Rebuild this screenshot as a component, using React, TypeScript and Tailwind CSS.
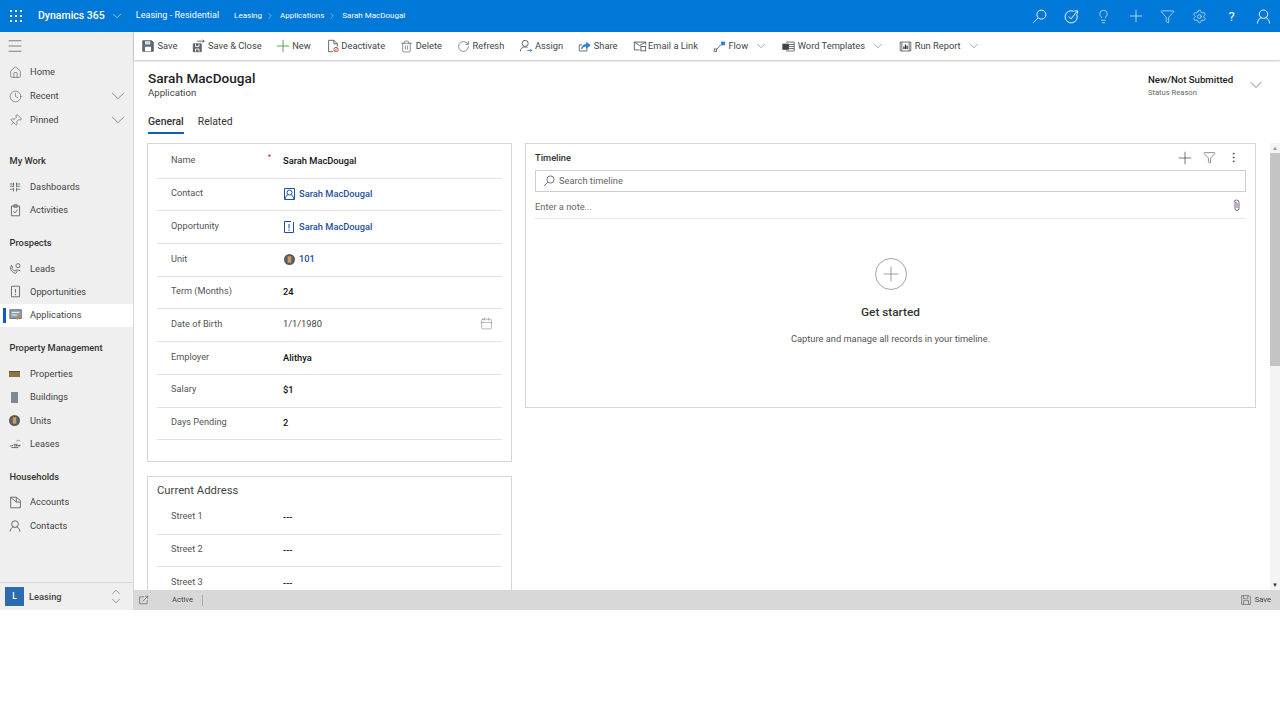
import { Lightbulb, Plus, Funnel, Settings, Home, Clock, Pin, ChevronDown, ChevronUp, ChevronRight, Trash2, RotateCw, EllipsisVertical, Calendar, Menu } from "lucide-react";
import type { ReactNode } from "react";

function Dots() {
    const pts = [0, 5, 10];
    return (
        <svg width="12" height="12" viewBox="0 0 12 12" fill="white">
            {pts.map((y) => pts.map((x) => <rect key={`${x}-${y}`} x={x} y={y} width="2" height="2" />))}
        </svg>
    );
}

function Svg({ children, size = 14, stroke = "#555" }: { children: ReactNode; size?: number; stroke?: string }) {
    return (
        <svg width={size} height={size} viewBox="0 0 16 16" fill="none" stroke={stroke} strokeWidth="1">
            {children}
        </svg>
    );
}

const thin = { size: 13, strokeWidth: 1.2, color: "#555" };

const SearchIcon = ({ size, stroke }: { size: number; stroke: string }) => (
    <Svg size={size} stroke={stroke}>
        <circle cx="10" cy="6" r="4.800" />
        <path d="M6.500 9.500L1.500 14.500" />
    </Svg>
);
const UserIcon = ({ size, stroke }: { size: number; stroke: string }) => (
    <Svg size={size} stroke={stroke}>
        <circle cx="8" cy="5.500" r="4.500" />
        <path d="M1.500 15.500c0-3.500 2.500-6 4.500-6.500M14.500 15.500c0-3.500-2.500-6-4.500-6.500" />
    </Svg>
);
const IconSave = () => (
    <Svg size={12}>
        <path d="M1 1h12l2 2v12H1z" fill="#5f6b7a" stroke="#444" />
        <rect x="4" y="1.500" width="7" height="4.500" fill="#d5dbe3" stroke="none" />
        <rect x="4" y="9" width="8" height="6" fill="#fff" stroke="none" />
    </Svg>
);
const IconSaveSmall = () => (
    <Svg size={10} stroke="#555">
        <path d="M1 1h12l2 2v12H1z" />
        <path d="M4 1v5h7V1M4 15V9h8v6" />
    </Svg>
);
const IconSaveClose = () => (
    <Svg>
        <path d="M1.500 5.500h9v9h-9z" fill="#667" />
        <path d="M4 5.500v3h4v-3M4 14.500v-3h4v3" stroke="#fff" />
        <path d="M6 2.500h8M12 1l2 1.500L12 4" />
    </Svg>
);
const IconDeactivate = () => (
    <Svg>
        <path d="M3 1.500h6l4 4v3M9 1.500v4h4M8 14.500H3v-13" />
        <circle cx="11.500" cy="12" r="2.500" stroke="#c0392b" />
        <path d="M10 13.500l3-3" stroke="#c0392b" />
    </Svg>
);
const IconAssign = () => (
    <Svg>
        <circle cx="7" cy="5" r="3.500" />
        <path d="M1.500 14c0-3 2.500-5 5.500-5 1 0 2 .3 2.800.8" />
        <path d="M9.500 13h5M13 11.500l1.500 1.500-1.500 1.500" stroke="#1f6fc0" />
    </Svg>
);
const IconEmailLink = () => (
    <Svg>
        <path d="M1.500 3.500h13v3M1.500 3.500v9h6M1.500 3.500l6 4 7-4" />
        <rect x="9" y="8.500" width="5.500" height="5" />
    </Svg>
);
const IconFlow = () => (
    <Svg size={13}>
        <rect x="1.500" y="11" width="3" height="3" />
        <path d="M4.500 11.500L10 5.500" />
        <rect x="10.500" y="2.500" width="4" height="3.500" fill="#2b7cd3" stroke="#2b7cd3" />
    </Svg>
);
const IconWord = () => (
    <Svg size={13}>
        <path d="M5 2.500h10v11H5" />
        <path d="M8 5.500h7M8 8h7M8 10.500h7" />
        <rect x="1" y="5" width="7" height="6.500" fill="#444" stroke="#444" />
    </Svg>
);
const IconReport = () => (
    <Svg size={13}>
        <path d="M1.500 2.500h13v11h-13zM3.500 2.500v11M12.500 2.500v11" />
        <path d="M6 11V8M8 11V5.500M10 11V7" strokeWidth="1.500" stroke="#333" />
    </Svg>
);
const IconShare = () => (
    <Svg size={13}>
        <path d="M11 9v4.500H1.500V6H5" />
        <path d="M4.500 11c0-4 3-5.500 6-5.500V3L15 6.500 10.500 10V7.500c-3 0-4.500 1-6 3.500z" fill="#2b7cd3" stroke="#2b7cd3" />
    </Svg>
);

function CmdItem({ icon, text, caret }: { icon: ReactNode; text: string; caret?: boolean }) {
    return (
        <div className="flex items-center text-[#444]">
            <div className="w-[15.500px] h-[14px] flex items-center">{icon}</div>
            <span>{text}</span>
            {caret && <ChevronDown size={14} strokeWidth={1} color="#666" className="ml-[6px] -mr-[1px]" />}
        </div>
    );
}

function CommandBar() {
    return (
        <div className="h-7 flex items-center gap-[15.100px] pl-[8px] text-[9.300px] bg-white shadow-[0_1px_2px_rgba(0,0,0,0.25)] z-10">
            <CmdItem icon={<IconSave />} text="Save" />
            <CmdItem icon={<IconSaveClose />} text="Save & Close" />
            <CmdItem icon={<Plus size={20} strokeWidth={0.8} color="#107c10" className="-ml-[4px] shrink-0" />} text="New" />
            <CmdItem icon={<IconDeactivate />} text="Deactivate" />
            <CmdItem icon={<Trash2 {...thin} />} text="Delete" />
            <CmdItem icon={<RotateCw {...thin} />} text="Refresh" />
            <CmdItem icon={<IconAssign />} text="Assign" />
            <CmdItem icon={<IconShare />} text="Share" />
            <CmdItem icon={<IconEmailLink />} text="Email a Link" />
            <CmdItem icon={<IconFlow />} text="Flow" caret />
            <CmdItem icon={<IconWord />} text="Word Templates" caret />
            <CmdItem icon={<IconReport />} text="Run Report" caret />
        </div>
    );
}

function TopBar() {
    return (
        <div className="h-8 bg-[#0078d7] flex items-center text-white shrink-0">
            <div className="ml-[10px] mr-[16px]"><Dots /></div>
            <span className="text-[10.500px] font-medium">Dynamics 365</span>
            <ChevronDown size={14} strokeWidth={1} className="ml-[5px] -mr-[1px]" />
            <span className="ml-[13px] text-[9.100px]">Leasing - Residential</span>
            <span className="ml-[15px] text-[8px]">Leasing</span>
            <ChevronRight size={10} strokeWidth={1} className="ml-[3px] mr-[5px]" />
            <span className="text-[8px]">Applications</span>
            <ChevronRight size={10} strokeWidth={1} className="ml-[3px] mr-[5px]" />
            <span className="text-[8px]">Sarah MacDougal</span>
            <div className="ml-auto flex items-center gap-[17px] mr-[9px]">
                <SearchIcon size={15} stroke="white" />
                <svg width="15" height="15" viewBox="0 0 16 16" fill="none" stroke="white" strokeWidth="1">
                    <path d="M13.500 5.500a6.500 6.500 0 1 1-3-3" />
                    <path d="M5 8l2.500 2.500L14 2.500M11 2h3.500v3" />
                </svg>
                <Lightbulb size={15} strokeWidth={1} />
                <Plus size={20} strokeWidth={0.8} className="-mx-[2.500px]" />
                <Funnel size={15} strokeWidth={1} />
                <Settings size={15} strokeWidth={1} />
                <span className="w-[15px] text-center text-[13px] leading-none">?</span>
                <UserIcon size={15} stroke="white" />
            </div>
        </div>
    );
}

const navIcon = { size: 13, strokeWidth: 1, color: "#444" };

function NavItem({ icon, text, caret, active }: { icon: ReactNode; text: string; caret?: boolean; active?: boolean }) {
    return (
        <div className={`relative h-[23.300px] flex items-center pl-[9px] pr-[8px] ${active ? "bg-white" : ""}`}>
            {active && <div className="absolute left-[3px] top-[4px] bottom-[4px] w-[3px] bg-[#0f5bc4]" />}
            <div className="w-[21px] flex items-center">{icon}</div>
            <span className="text-[#444]">{text}</span>
            {caret && <ChevronDown size={22} strokeWidth={0.7} color="#555" className="ml-auto -mr-[4px]" />}
        </div>
    );
}

function NavHeader({ text, first }: { text: string; first?: boolean }) {
    return <div className={`pl-[9.500px] h-[16px] flex items-center font-medium text-[#333] ${first ? "mt-[21px]" : "mt-[13px]"} mb-[6.350px]`}>{text}</div>;
}

function Sidebar() {
    return (
        <div className="w-[134px] shrink-0 bg-[#efefef] border-r border-[#d8d8d8] flex flex-col text-[9.300px]">
            <div className="h-7 flex items-center pl-[6px]"><Menu size={18} strokeWidth={0.8} color="#333" /></div>
            <div className="mt-[0.500px] flex flex-col gap-[0.700px]">
                <NavItem icon={<Home {...navIcon} />} text="Home" />
                <NavItem icon={<Clock {...navIcon} />} text="Recent" caret />
                <NavItem icon={<Pin {...navIcon} className="rotate-45" />} text="Pinned" caret />
            </div>
            <NavHeader text="My Work" first />
            <NavItem icon={<Svg size={12}><path d="M1 4h5M1 7h5M10 4h5M10 7h5M6 2v6M10 2v6M1 11h5M10 11h5M6 9v5M10 9v5" /></Svg>} text="Dashboards" />
            <NavItem icon={<Svg size={13}><path d="M3 2.500h10v12H3zM6 1h4v3H6zM5.500 9l2 2 3-4" /></Svg>} text="Activities" />
            <NavHeader text="Prospects" />
            <NavItem icon={<Svg size={13}><path d="M2 6c-1 3 2 7 6 8l2-2-2-2-1.500 1-3-3 1-1.500L3 4z" /><circle cx="11" cy="4.500" r="2.500" /><path d="M8 11c1-1.500 4-1.500 6 0" /></Svg>} text="Leads" />
            <NavItem icon={<Svg size={13}><path d="M3 1.500h10v13H3zM8 5v4.500M8 11v1.500" /></Svg>} text="Opportunities" />
            <NavItem active icon={<Svg size={14}><rect x="1" y="2" width="13" height="10" fill="#8da0ad" stroke="#667" /><path d="M3 5h9M3 8h6" stroke="#fff" /><path d="M9 13l5-5" stroke="#c98a2b" strokeWidth="2" /></Svg>} text="Applications" />
            <NavHeader text="Property Management" />
            <NavItem icon={<div className="w-[11px] h-[6px] bg-[#8a7440] border-t border-[#5e5230]" />} text="Properties" />
            <NavItem icon={<div className="w-[7px] h-[11px] ml-[2px] bg-[#7d8a96]" />} text="Buildings" />
            <NavItem icon={<UnitIcon size={11} />} text="Units" />
            <NavItem icon={<Svg size={13}><path d="M1 11h3l2-2h4l-1 2H6M9 11l5-1-3 3H3" /><path d="M9 5a3 2 0 0 1 5 0" stroke="#888" /></Svg>} text="Leases" />
            <NavHeader text="Households" />
            <NavItem icon={<Svg size={13}><path d="M2 1.500h7l5 4v9H2zM2 1.500l7 6v-6M9 7.500h5" /></Svg>} text="Accounts" />
            <NavItem icon={<UserIcon size={12} stroke="#444" />} text="Contacts" />
            <div className="mt-auto h-7 border-t border-[#d8d8d8] flex items-center pl-[5px] pr-[10px]">
                <div className="w-[19px] h-[19px] bg-[#2b6cb0] text-white flex items-center justify-center text-[8.500px] font-medium">L</div>
                <span className="ml-[5px] font-medium text-[#444]">Leasing</span>
                <div className="ml-auto flex flex-col">
                    <ChevronUp size={14} strokeWidth={0.8} color="#333" className="-mb-[5px]" />
                    <ChevronDown size={14} strokeWidth={0.8} color="#333" />
                </div>
            </div>
        </div>
    );
}

function UnitIcon({ size }: { size: number }) {
    return (
        <svg width={size} height={size} viewBox="0 0 12 12">
            <circle cx="6" cy="6" r="6" fill="#5b5b5b" />
            <rect x="4" y="2.500" width="4" height="7" fill="#c99a66" />
        </svg>
    );
}

function Field({ label, required, children, bold = true, className = "" }: { label: string; required?: boolean; children: ReactNode; bold?: boolean; className?: string }) {
    return (
        <div className="h-[32.700px] flex items-center border-b border-[#e2e2e2]">
            <div className="relative w-[126px] pl-[14px] -mt-[3px] text-[#555] text-[9.200px]">
                {label}
                {required && <span className="absolute right-[12px] -top-[1px] text-[#c00] text-[7px]">*</span>}
            </div>
            <div className={`flex-1 flex items-center pr-[9px] -mt-[1px] ${bold ? "font-medium text-[#111]" : "text-[#444]"} ${className}`}>{children}</div>
        </div>
    );
}

function Lookup({ icon, text }: { icon: ReactNode; text: string }) {
    return (
        <div className="flex items-center gap-[4px] ml-[1px] text-[#1e4f9c] font-medium">
            {icon}
            <span>{text}</span>
        </div>
    );
}

function FormCard() {
    return (
        <div className="h-[319px] shrink-0 border border-[#d4d4d4] px-[9px] pt-[2px]">
            <Field label="Name" required>Sarah MacDougal</Field>
            <Field label="Contact">
                <Lookup text="Sarah MacDougal" icon={<svg width="11" height="12" viewBox="0 0 11 12" fill="none" stroke="#1e4f9c"><path d="M.5.500h10v11H.5z" /><circle cx="5.500" cy="4.500" r="2.500" /><path d="M1 11c1-3 2-4 3-4.500M10 11c-1-3-2-4-3-4.500" /></svg>} />
            </Field>
            <Field label="Opportunity">
                <Lookup text="Sarah MacDougal" icon={<svg width="11" height="12" viewBox="0 0 11 12" fill="none" stroke="#1e4f9c"><path d="M7 .500H.5v11h9V1M5 3v4.500M5 8.500V10" /></svg>} />
            </Field>
            <Field label="Unit">
                <Lookup text="101" icon={<UnitIcon size={11} />} />
            </Field>
            <Field label="Term (Months)">24</Field>
            <Field label="Date of Birth" bold={false} className="-translate-y-[1px]">
                <span>1/1/1980</span>
                <Calendar size={13} strokeWidth={1} color="#777" className="ml-auto" />
            </Field>
            <Field label="Employer">Alithya</Field>
            <Field label="Salary">$1</Field>
            <Field label="Days Pending">2</Field>
        </div>
    );
}

function AddressCard() {
    return (
        <div className="mt-[14px] border border-[#d4d4d4] px-[9px] pt-[6px]">
            <div className="text-[11.300px] leading-[16px] text-[#444] mb-[3px]">Current Address</div>
            <Field label="Street 1">---</Field>
            <Field label="Street 2">---</Field>
            <Field label="Street 3">---</Field>
        </div>
    );
}

function Timeline() {
    return (
        <div className="w-[731px] h-[265px] shrink-0 border border-[#d4d4d4] px-[9px] flex flex-col">
            <div className="h-[26px] flex items-center pt-[1px]">
                <span className="font-medium text-[#333]">Timeline</span>
                <div className="ml-auto flex items-center gap-[9px] mr-[6px]">
                    <Plus size={20} strokeWidth={0.8} color="#333" className="-mx-[2px]" />
                    <Funnel size={13} strokeWidth={1} color="#333" className="ml-[1px]" />
                    <EllipsisVertical size={13} strokeWidth={1.200} color="#333" className="ml-[2px]" />
                </div>
            </div>
            <div className="h-[21.500px] border border-[#cfcfcf] flex items-center pl-[7px] pt-[1px] gap-[4px] text-[#666]">
                <SearchIcon size={12} stroke="#444" />
                Search timeline
            </div>
            <div className="h-[27px] flex items-center border-b border-[#e6e6e6] text-[#666] pt-[5px]">
                <span>Enter a note...</span>
                <svg width="7" height="13" viewBox="0 0 7 13" fill="none" stroke="#7b5f8f" className="ml-auto mr-[6px] -mt-[3px]">
                    <path d="M1 3.500a2.500 2.500 0 0 1 5 0v6a2 2 0 0 1-4 0V4.500a1 1 0 0 1 2 0V9" />
                </svg>
            </div>
            <div className="flex flex-col items-center mt-[39px]">
                <div className="w-[32px] h-[32px] rounded-full border border-[#a5a5a5] flex items-center justify-center">
                    <Plus size={24} strokeWidth={0.7} color="#777" />
                </div>
                <span className="mt-[14px] text-[11.800px] font-medium text-[#333]">Get started</span>
                <span className="mt-[11px] text-[#555]">Capture and manage all records in your timeline.</span>
            </div>
        </div>
    );
}

function Scrollbar() {
    return (
        <div className="w-[10px] shrink-0 ml-auto bg-[#f4f4f4] flex flex-col items-center">
            <div className="h-[10px] text-[6px] leading-[10px] text-[#999]">▲</div>
            <div className="w-full h-[213px] bg-[#c4c4c4]" />
            <div className="mt-auto h-[10px] text-[6px] leading-[10px] text-[#333]">▼</div>
        </div>
    );
}

function Header() {
    return (
        <div className="h-[83px] shrink-0 pl-[14px] pr-[16px] pt-[10px]">
            <div className="flex">
                <div>
                    <div className="text-[13.600px] font-medium leading-[17px] text-[#222]">Sarah MacDougal</div>
                    <div className="text-[9.600px] leading-[12px] text-[#444]">Application</div>
                </div>
                <div className="ml-auto flex items-center">
                    <div className="w-[100px] pt-[2px]">
                        <div className="font-medium text-[#222] text-[9.650px] leading-[13px]">New/Not Submitted</div>
                        <div className="text-[7.600px] text-[#666] leading-[11px] mt-[1px]">Status Reason</div>
                    </div>
                    <ChevronDown size={20} strokeWidth={0.8} color="#444" className="-mx-[2px]" />
                </div>
            </div>
            <div className="flex gap-[14px] mt-[13px] text-[10.400px] text-[#333]">
                <div className="h-[22px] border-b-2 border-[#1160b7] font-medium pt-[2px]">General</div>
                <div className="pt-[2px]">Related</div>
            </div>
        </div>
    );
}

export default function App() {
    return (
        <div className="h-[610px] flex flex-col font-['Roboto',sans-serif] bg-white overflow-hidden">
            <TopBar />
            <div className="flex flex-1 min-h-0">
                <Sidebar />
                <div className="flex-1 min-w-0 flex flex-col">
                    <CommandBar />
                    <div className="flex-1 min-h-0 flex flex-col">
                        <Header />
                        <div className="flex-1 min-h-0 flex text-[9.300px] pl-[13px]">
                            <div className="w-[365px] shrink-0 flex flex-col overflow-hidden">
                                <FormCard />
                                <AddressCard />
                            </div>
                            <div className="ml-[13px]"><Timeline /></div>
                            <Scrollbar />
                        </div>
                    </div>
                    <div className="h-5 shrink-0 bg-[#d8d8d8] flex items-center text-[7.600px] text-[#444] pl-[5px] pr-[9px]">
                        <svg width="10" height="10" viewBox="0 0 16 16" fill="none" stroke="#555"><path d="M8 3H1v11h12V8M6 10l8-8M10 2h4v4" /></svg>
                        <span className="ml-[23px]">Active</span>
                        <div className="ml-[9px] w-px h-[11px] bg-[#aaa]" />
                        <div className="ml-auto flex items-center gap-[4px]">
                            <IconSaveSmall />
                            Save
                        </div>
                    </div>
                </div>
            </div>
        </div>
    );
}
